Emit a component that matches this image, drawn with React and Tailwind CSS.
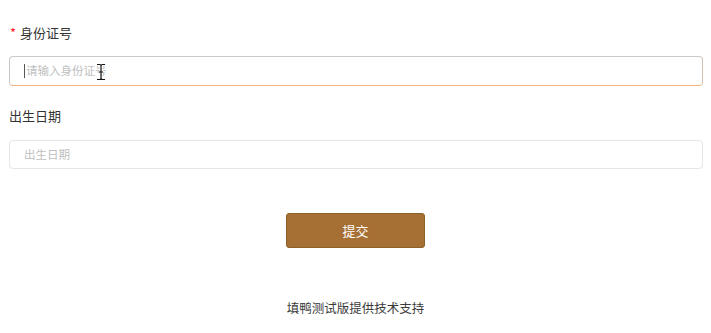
export default function App() {
  const font = { fontFamily: '"Noto Sans CJK SC", "Noto Sans", sans-serif' };
  return (
    <div className="min-h-[333px] w-[711px] bg-white px-[9px] pt-[24px]" style={font}>
      <label className="flex h-[18px] items-center text-[13px] leading-[18px] text-[#333]">
        <span className="mr-[4px] ml-[1px] text-[#f5222d]">*</span>
        身份证号
      </label>
      <div className="relative mt-[14px] flex h-[30px] w-[694px] items-center rounded-[4px] border border-[#c9c9c9] border-b-[#f0b47c] border-r-[#d6c2ae] pl-[14px] text-[11.5px] text-[#c0c0c0]">
        <span className="mr-[1px] h-[14px] w-px bg-[#555]" />
        请输入身份证号
        <svg className="absolute left-[85px] top-[6px]" width="12" height="18" viewBox="0 0 12 18">
          <path d="M2 1.5h2.5c.8 0 1.5.5 1.5 1.2V15.3c0 .7-.7 1.2-1.5 1.2H2M10 1.5H7.5c-.8 0-1.5.5-1.5 1.2V15.3c0 .7.7 1.2 1.5 1.2H10M4 9h4" fill="none" stroke="#fff" strokeWidth="3" />
          <path d="M2 1.5h2.5c.8 0 1.5.5 1.5 1.2V15.3c0 .7-.7 1.2-1.5 1.2H2M10 1.5H7.5c-.8 0-1.5.5-1.5 1.2V15.3c0 .7.7 1.2 1.5 1.2H10M4 9h4" fill="none" stroke="#111" strokeWidth="1.2" />
        </svg>
      </div>

      <label className="mt-[21px] flex h-[18px] items-center text-[13px] leading-[18px] text-[#333]">出生日期</label>
      <div className="mt-[15px] flex h-[29px] w-[694px] items-center rounded-[4px] border border-[#e6e6e6] pl-[14px] text-[11.5px] text-[#c0c0c0]">
        出生日期
      </div>

      <div className="mt-[44px] flex justify-center">
        <button
          type="button"
          className="h-[35px] w-[139px] rounded-[3px] border border-[#8f6128] bg-[#a66f33] text-[13px] text-white"
        >
          提交
        </button>
      </div>

      <p className="mt-[51px] text-center text-[12.5px] leading-[18px] text-[#3a3a3a]">填鸭测试版提供技术支持</p>
    </div>
  );
}
